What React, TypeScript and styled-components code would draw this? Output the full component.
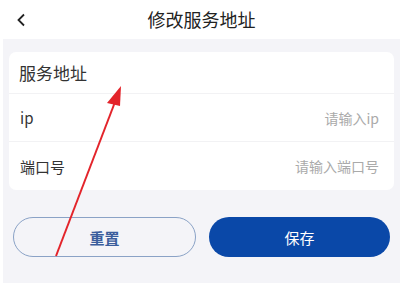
import React from "react";
import styled, { createGlobalStyle } from "styled-components";

const GlobalStyle = createGlobalStyle`
    html, body {
        margin: 0;
        padding: 0;
        background: #ffffff;
        font-family: "Noto Sans CJK SC", "Noto Sans", sans-serif;
    }
`;

const Page = styled.div`
    position: relative;
    width: 403px;
    height: 283px;
    overflow: hidden;
    display: flex;
    flex-direction: column;
`;

const Header = styled.div`
    height: 39px;
    display: flex;
    align-items: center;
    justify-content: center;
    position: relative;
    flex-shrink: 0;
`;

const BackButton = styled.div`
    position: absolute;
    left: 14px;
    top: 12px;
    width: 14px;
    height: 16px;
    display: flex;
    align-items: center;
    justify-content: center;
`;

const Title = styled.div`
    font-size: 18px;
    color: #222;
    line-height: 1;
    margin-top: -1px;
`;

const Body = styled.div`
    flex: 1;
    margin: 0 3px;
    background: #f4f4f8;
    padding: 13px 6px 0;
`;

const Card = styled.div`
    background: #ffffff;
    border-radius: 7px;
    overflow: hidden;
`;

const Row = styled.div<{ $height: number }>`
    height: ${(p) => p.$height}px;
    display: flex;
    align-items: center;
    justify-content: space-between;
    padding: 0 15px 0 10px;
    border-top: 1px solid #f2f2f4;
    &:first-child {
        border-top: none;
    }
`;

const SectionTitle = styled.div`
    font-size: 17px;
    color: #333;
`;

const Label = styled.div`
    font-size: 15px;
    color: #333;
    padding-left: 1px;
`;

const Placeholder = styled.div`
    font-size: 14px;
    color: #aaaaaa;
`;

const Actions = styled.div`
    display: flex;
    gap: 13px;
    margin: 27px 4px 0;
`;

const Button = styled.div<{ $primary?: boolean }>`
    flex: 1;
    height: 40px;
    box-sizing: border-box;
    border-radius: 20px;
    display: flex;
    align-items: center;
    justify-content: center;
    font-size: 15px;
    background: ${(p) => (p.$primary ? "#0a48a8" : "transparent")};
    color: ${(p) => (p.$primary ? "#ffffff" : "#3a5d9c")};
    border: ${(p) => (p.$primary ? "none" : "1px solid #8aa2c6")};
    font-weight: ${(p) => (p.$primary ? 400 : 600)};
`;

const Annotation = styled.svg`
    position: absolute;
    left: 0;
    top: 0;
    pointer-events: none;
`;

export default function App() {
    return (
        <>
            <GlobalStyle />
            <Page>
                <Header>
                    <BackButton>
                        <svg width="10" height="14" viewBox="0 0 10 14">
                            <path d="M8 1.5 L2.5 7 L8 12.5" fill="none" stroke="#222" strokeWidth="1.8" />
                        </svg>
                    </BackButton>
                    <Title>修改服务地址</Title>
                </Header>
                <Body>
                    <Card>
                        <Row $height={41}>
                            <SectionTitle>服务地址</SectionTitle>
                        </Row>
                        <Row $height={47}>
                            <Label>ip</Label>
                            <Placeholder>请输入ip</Placeholder>
                        </Row>
                        <Row $height={48}>
                            <Label>端口号</Label>
                            <Placeholder>请输入端口号</Placeholder>
                        </Row>
                    </Card>
                    <Actions>
                        <Button>重置</Button>
                        <Button $primary>保存</Button>
                    </Actions>
                </Body>
                <Annotation width="403" height="283" viewBox="0 0 403 283">
                    <line x1="56" y1="256" x2="115" y2="102" stroke="#e3242b" strokeWidth="2" />
                    <polygon points="121,86 107,103 120,106" fill="#e3242b" />
                </Annotation>
            </Page>
        </>
    );
}
